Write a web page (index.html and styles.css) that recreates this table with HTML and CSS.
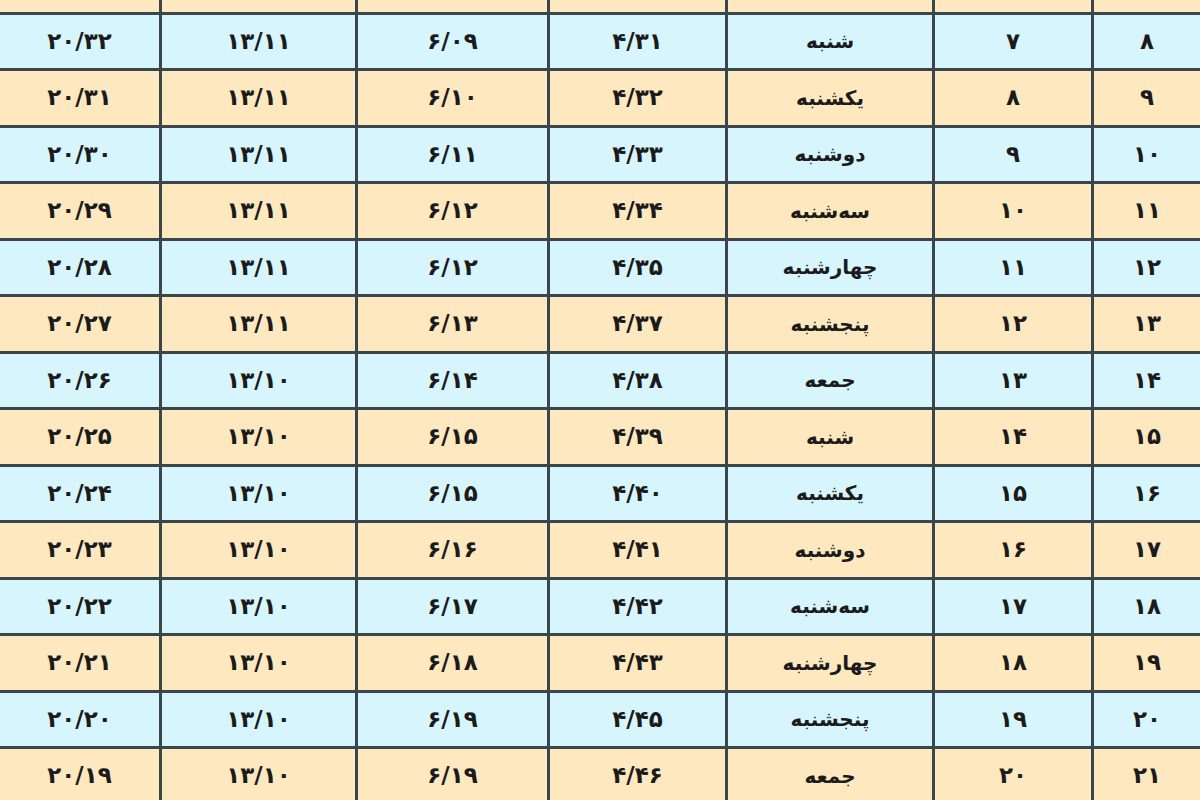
FILE: index.html
```html
<!DOCTYPE html>
<html lang="fa">
<head>
<meta charset="utf-8">
<title>جدول اوقات شرعی</title>
<link rel="stylesheet" href="styles.css">
</head>
<body>
<div class="sheet">
<table class="times" dir="rtl">
<colgroup>
<col class="c1"><col class="c2"><col class="c3"><col class="c4"><col class="c5"><col class="c6"><col class="c7">
</colgroup>
<tbody>
<tr class="even"><td>۷</td><td>۶</td><td class="day">جمعه</td><td>۴/۳۰</td><td>۶/۰۸</td><td>۱۳/۱۱</td><td>۲۰/۳۳</td></tr>
<tr class="odd"><td>۸</td><td>۷</td><td class="day">شنبه</td><td>۴/۳۱</td><td>۶/۰۹</td><td>۱۳/۱۱</td><td>۲۰/۳۲</td></tr>
<tr class="even"><td>۹</td><td>۸</td><td class="day">یکشنبه</td><td>۴/۳۲</td><td>۶/۱۰</td><td>۱۳/۱۱</td><td>۲۰/۳۱</td></tr>
<tr class="odd"><td>۱۰</td><td>۹</td><td class="day">دوشنبه</td><td>۴/۳۳</td><td>۶/۱۱</td><td>۱۳/۱۱</td><td>۲۰/۳۰</td></tr>
<tr class="even"><td>۱۱</td><td>۱۰</td><td class="day">سه‌شنبه</td><td>۴/۳۴</td><td>۶/۱۲</td><td>۱۳/۱۱</td><td>۲۰/۲۹</td></tr>
<tr class="odd"><td>۱۲</td><td>۱۱</td><td class="day">چهارشنبه</td><td>۴/۳۵</td><td>۶/۱۲</td><td>۱۳/۱۱</td><td>۲۰/۲۸</td></tr>
<tr class="even"><td>۱۳</td><td>۱۲</td><td class="day">پنجشنبه</td><td>۴/۳۷</td><td>۶/۱۳</td><td>۱۳/۱۱</td><td>۲۰/۲۷</td></tr>
<tr class="odd"><td>۱۴</td><td>۱۳</td><td class="day">جمعه</td><td>۴/۳۸</td><td>۶/۱۴</td><td>۱۳/۱۰</td><td>۲۰/۲۶</td></tr>
<tr class="even"><td>۱۵</td><td>۱۴</td><td class="day">شنبه</td><td>۴/۳۹</td><td>۶/۱۵</td><td>۱۳/۱۰</td><td>۲۰/۲۵</td></tr>
<tr class="odd"><td>۱۶</td><td>۱۵</td><td class="day">یکشنبه</td><td>۴/۴۰</td><td>۶/۱۵</td><td>۱۳/۱۰</td><td>۲۰/۲۴</td></tr>
<tr class="even"><td>۱۷</td><td>۱۶</td><td class="day">دوشنبه</td><td>۴/۴۱</td><td>۶/۱۶</td><td>۱۳/۱۰</td><td>۲۰/۲۳</td></tr>
<tr class="odd"><td>۱۸</td><td>۱۷</td><td class="day">سه‌شنبه</td><td>۴/۴۲</td><td>۶/۱۷</td><td>۱۳/۱۰</td><td>۲۰/۲۲</td></tr>
<tr class="even"><td>۱۹</td><td>۱۸</td><td class="day">چهارشنبه</td><td>۴/۴۳</td><td>۶/۱۸</td><td>۱۳/۱۰</td><td>۲۰/۲۱</td></tr>
<tr class="odd"><td>۲۰</td><td>۱۹</td><td class="day">پنجشنبه</td><td>۴/۴۵</td><td>۶/۱۹</td><td>۱۳/۱۰</td><td>۲۰/۲۰</td></tr>
<tr class="even"><td>۲۱</td><td>۲۰</td><td class="day">جمعه</td><td>۴/۴۶</td><td>۶/۱۹</td><td>۱۳/۱۰</td><td>۲۰/۱۹</td></tr>
<tr class="odd"><td>۲۲</td><td>۲۱</td><td class="day">شنبه</td><td>۴/۴۷</td><td>۶/۲۰</td><td>۱۳/۱۰</td><td>۲۰/۱۸</td></tr>
</tbody>
</table>
</div>
</body>
</html>
```
FILE: styles.css
```css
html, body {
  margin: 0;
  padding: 0;
}
body {
  width: 1200px;
  height: 800px;
  overflow: hidden;
  background: #fde8c0;
}
.sheet {
  width: 1200px;
  height: 800px;
  overflow: hidden;
}
.times {
  border-collapse: collapse;
  table-layout: fixed;
  width: 1203px;
  margin-left: -3px;
  margin-top: -45px;
  font-family: "DejaVu Sans", sans-serif;
  font-weight: bold;
  font-size: 23px;
  color: #1b1b1b;
}
.c1 { width: 109px; }
.c2 { width: 159px; }
.c3 { width: 207px; }
.c4 { width: 178px; }
.c5 { width: 192px; }
.c6 { width: 196px; }
.c7 { width: 162px; }
.times td {
  border: 3px solid #3a454c;
  height: 50px;
  padding: 0;
  text-align: center;
  vertical-align: middle;
  line-height: 1;
}
.times td.day {
  font-size: 20px;
}
.times tr {
  height: 56.5px;
}
.odd td {
  background: #d7f5fc;
}
.even td {
  background: #fde8c0;
}
```
